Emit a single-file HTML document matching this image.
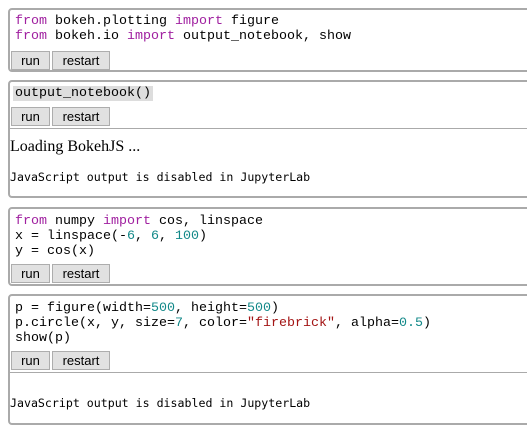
<html><head><style>
body{margin:0;width:527px;height:433px;background:#fff;position:relative;overflow:hidden}
.cell{position:absolute;left:8px;width:530px;border:2px solid #aaa;border-radius:4px;box-sizing:border-box}
.code{position:absolute;left:5px;font:13.33px/15px "Liberation Mono",monospace;color:#000;white-space:pre}
.k{color:#a020a0}.n{color:#118888}.s{color:#a31515}
.btn{position:absolute;height:19px;background:#e1e1e1;border:1px solid #adadad;box-sizing:border-box;font:13px/17px "Liberation Sans",sans-serif;text-align:center;color:#000}
.sep{position:absolute;left:0;right:0;border-top:1px solid #aaa}
.js{position:absolute;left:0;font:11.6px/14px "DejaVu Sans Mono","Liberation Mono",monospace;white-space:pre}
</style></head><body>
<div class="cell" style="top:8px;height:64px">
<div class="code" style="top:4px"><span class="k">from</span> bokeh.plotting <span class="k">import</span> figure
<span class="k">from</span> bokeh.io <span class="k">import</span> output_notebook, show</div>
<div class="btn" style="left:1px;top:41px;width:39px">run</div>
<div class="btn" style="left:42px;top:41px;width:58px">restart</div>
</div>
<div class="cell" style="top:80px;height:118px">
<div class="code" style="top:4px;left:3px;background:#ddd;padding:0 2px">output_notebook()</div>
<div class="btn" style="left:1px;top:25px;width:39px">run</div>
<div class="btn" style="left:42px;top:25px;width:58px">restart</div>
<div class="sep" style="top:46px"></div>
<div style="position:absolute;left:0;top:56px;font:16px/18px 'Liberation Serif',serif">Loading BokehJS ...</div>
<div class="js" style="top:88px">JavaScript output is disabled in JupyterLab</div>
</div>
<div class="cell" style="top:207px;height:79px">
<div class="code" style="top:5px"><span class="k">from</span> numpy <span class="k">import</span> cos, linspace
x = linspace(-<span class="n">6</span>, <span class="n">6</span>, <span class="n">100</span>)
y = cos(x)</div>
<div class="btn" style="left:1px;top:55px;width:39px">run</div>
<div class="btn" style="left:42px;top:55px;width:58px">restart</div>
</div>
<div class="cell" style="top:294px;height:131px">
<div class="code" style="top:5px">p = figure(width=<span class="n">500</span>, height=<span class="n">500</span>)
p.circle(x, y, size=<span class="n">7</span>, color=<span class="s">"firebrick"</span>, alpha=<span class="n">0.5</span>)
show(p)</div>
<div class="btn" style="left:1px;top:55px;width:39px">run</div>
<div class="btn" style="left:42px;top:55px;width:58px">restart</div>
<div class="sep" style="top:76px"></div>
<div class="js" style="top:100px">JavaScript output is disabled in JupyterLab</div>
</div>
</body></html>
